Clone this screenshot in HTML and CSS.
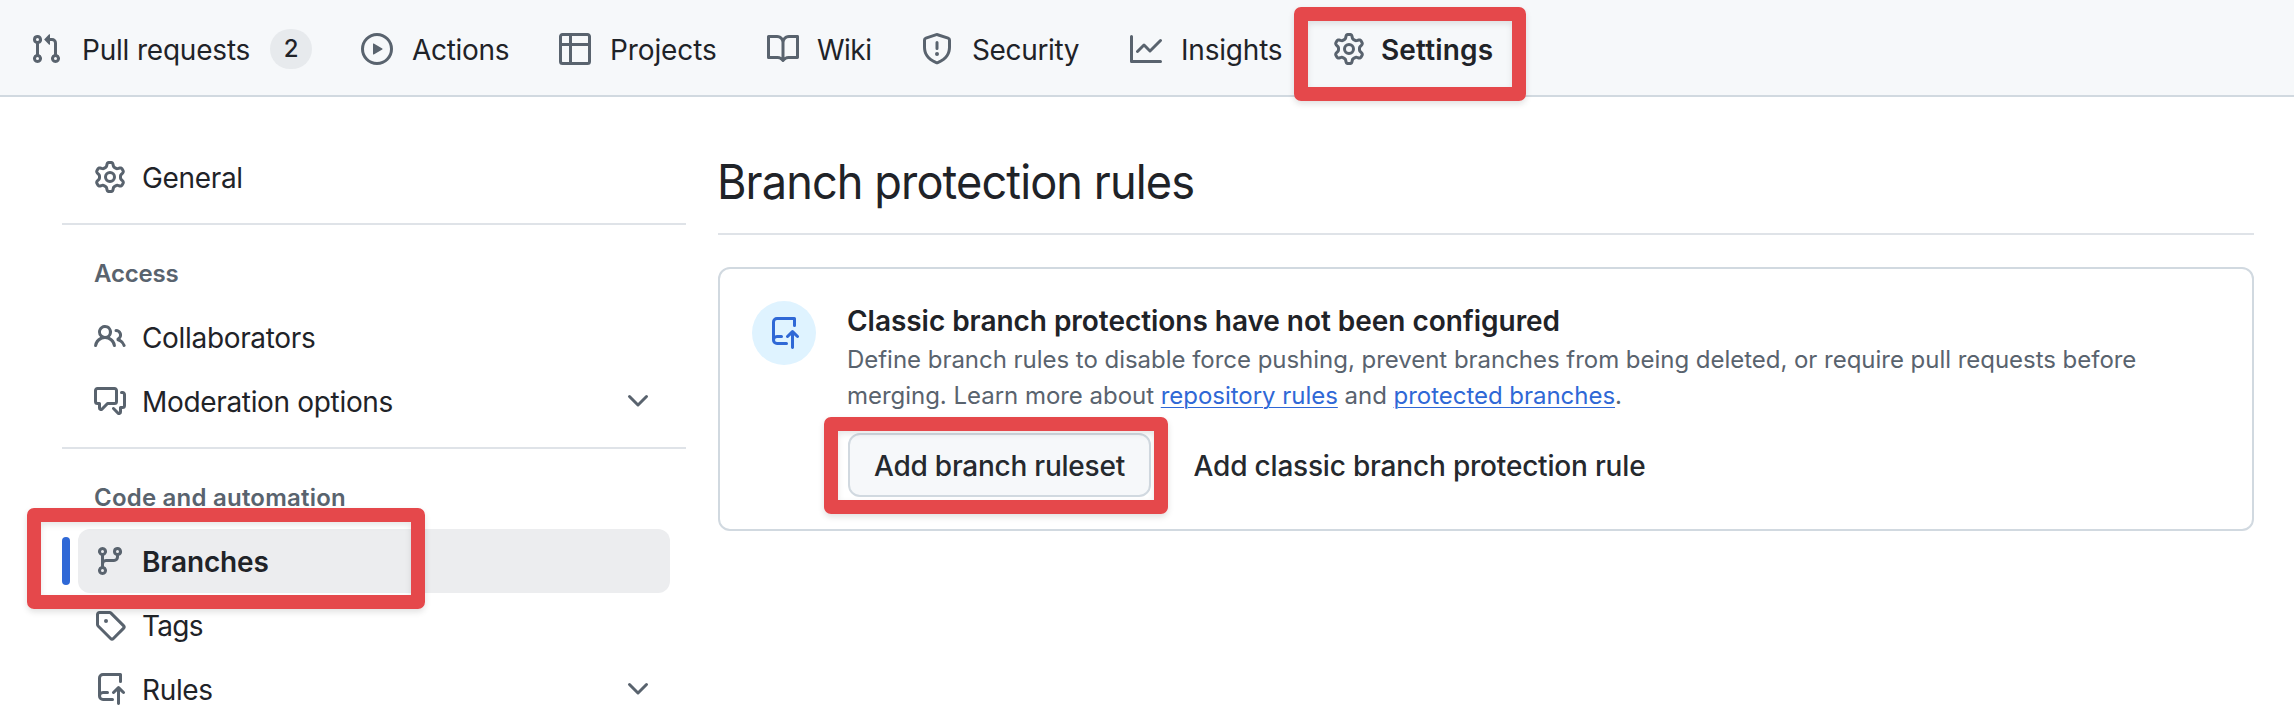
FILE: index.html
```html
<!DOCTYPE html>
<html lang="en">
<head>
<meta charset="utf-8">
<title>Branch protection rules</title>
<link rel="stylesheet" href="styles.css">
</head>
<body>
<svg class="sprite" aria-hidden="true">
  <symbol id="i-pr" viewBox="0 0 16 16"><path d="M1.5 3.25a2.25 2.25 0 1 1 3 2.122v5.256a2.251 2.251 0 1 1-1.5 0V5.372A2.25 2.25 0 0 1 1.5 3.25Zm5.677-.177L9.573.677A.25.25 0 0 1 10 .854V2.5h1A2.5 2.5 0 0 1 13.5 5v5.628a2.251 2.251 0 1 1-1.5 0V5a1 1 0 0 0-1-1h-1v1.646a.25.25 0 0 1-.427.177L7.177 3.427a.25.25 0 0 1 0-.354ZM3.75 2.5a.75.75 0 1 0 0 1.5.75.75 0 0 0 0-1.5Zm0 9.5a.75.75 0 1 0 0 1.5.75.75 0 0 0 0-1.5Zm8.25.75a.75.75 0 1 0 1.5 0 .75.75 0 0 0-1.5 0Z"/></symbol>
  <symbol id="i-play" viewBox="0 0 16 16"><path d="M8 0a8 8 0 1 1 0 16A8 8 0 0 1 8 0ZM1.5 8a6.5 6.5 0 1 0 13 0 6.5 6.5 0 0 0-13 0Zm4.879-2.773 4.264 2.559a.25.25 0 0 1 0 .428l-4.264 2.559A.25.25 0 0 1 6 10.559V5.442a.25.25 0 0 1 .379-.215Z"/></symbol>
  <symbol id="i-table" viewBox="0 0 16 16"><path d="M0 1.75C0 .784.784 0 1.75 0h12.5C15.216 0 16 .784 16 1.75v12.5A1.75 1.75 0 0 1 14.25 16H1.75A1.75 1.75 0 0 1 0 14.25ZM6.5 6.5v8h7.75a.25.25 0 0 0 .25-.25V6.5Zm8-1.5V1.75a.25.25 0 0 0-.25-.25H6.5V5Zm-13 1.5v7.75c0 .138.112.25.25.25H5v-8ZM5 5V1.5H1.75a.25.25 0 0 0-.25.25V5Z"/></symbol>
  <symbol id="i-book" viewBox="0 0 16 16"><path d="M0 1.75A.75.75 0 0 1 .75 1h4.253c1.227 0 2.317.59 3 1.501A3.743 3.743 0 0 1 11.006 1h4.245a.75.75 0 0 1 .75.75v10.5a.75.75 0 0 1-.75.75h-4.507a2.25 2.25 0 0 0-1.591.659l-.622.621a.75.75 0 0 1-1.06 0l-.622-.621A2.25 2.25 0 0 0 5.258 13H.75a.75.75 0 0 1-.75-.75Zm7.251 10.324.004-5.073-.002-2.253A2.25 2.25 0 0 0 5.003 2.5H1.5v9h3.757a3.75 3.75 0 0 1 1.994.574ZM8.755 4.75l-.004 7.322a3.752 3.752 0 0 1 1.992-.572H14.5v-9h-3.495a2.25 2.25 0 0 0-2.25 2.25Z"/></symbol>
  <symbol id="i-shield" viewBox="0 0 16 16"><path d="M7.467.133a1.748 1.748 0 0 1 1.066 0l5.25 1.68A1.75 1.75 0 0 1 15 3.48V7c0 1.566-.32 3.182-1.303 4.682-.983 1.498-2.585 2.813-5.032 3.855a1.697 1.697 0 0 1-1.33 0c-2.447-1.042-4.049-2.357-5.032-3.855C1.32 10.182 1 8.566 1 7V3.48a1.75 1.75 0 0 1 1.217-1.667Zm.61 1.429a.25.25 0 0 0-.153 0l-5.25 1.68a.25.25 0 0 0-.174.238V7c0 1.358.275 2.666 1.057 3.86.784 1.194 2.121 2.34 4.366 3.297a.196.196 0 0 0 .154 0c2.245-.956 3.582-2.104 4.366-3.298C13.225 9.666 13.5 8.36 13.5 7V3.48a.251.251 0 0 0-.174-.237l-5.25-1.68ZM8.75 4.75v3a.75.75 0 0 1-1.5 0v-3a.75.75 0 0 1 1.5 0ZM9 10.5a1 1 0 1 1-2 0 1 1 0 0 1 2 0Z"/></symbol>
  <symbol id="i-graph" viewBox="0 0 16 16"><path d="M1.5 1.75V13.5h13.75a.75.75 0 0 1 0 1.5H.75a.75.75 0 0 1-.75-.75V1.75a.75.75 0 0 1 1.5 0Zm14.28 2.53-5.25 5.25a.75.75 0 0 1-1.06 0L7 7.06 4.28 9.78a.751.751 0 0 1-1.042-.018.751.751 0 0 1-.018-1.042l3.25-3.25a.75.75 0 0 1 1.06 0L10 7.94l4.72-4.72a.751.751 0 0 1 1.042.018.751.751 0 0 1 .018 1.042Z"/></symbol>
  <symbol id="i-gear" viewBox="0 0 16 16"><path d="M8 0a8.2 8.2 0 0 1 .701.031C9.444.095 9.99.645 10.16 1.29l.288 1.107c.018.066.079.158.212.224.231.114.454.243.668.386.123.082.233.09.299.071l1.103-.303c.644-.176 1.392.021 1.82.63.27.385.506.792.704 1.218.315.675.111 1.422-.364 1.891l-.814.806c-.049.048-.098.147-.088.294.016.257.016.515 0 .772-.01.147.038.246.088.294l.814.806c.475.469.679 1.216.364 1.891a7.977 7.977 0 0 1-.704 1.217c-.428.61-1.176.807-1.82.63l-1.102-.302c-.067-.019-.177-.011-.3.071a5.909 5.909 0 0 1-.668.386c-.133.066-.194.158-.211.224l-.29 1.106c-.168.646-.715 1.196-1.458 1.26a8.006 8.006 0 0 1-1.402 0c-.743-.064-1.289-.614-1.458-1.26l-.289-1.106c-.018-.066-.079-.158-.212-.224a5.738 5.738 0 0 1-.668-.386c-.123-.082-.233-.09-.299-.071l-1.103.303c-.644.176-1.392-.021-1.82-.63a8.12 8.12 0 0 1-.704-1.218c-.315-.675-.111-1.422.363-1.891l.815-.806c.05-.048.098-.147.088-.294a6.214 6.214 0 0 1 0-.772c.01-.147-.038-.246-.088-.294l-.815-.806C.635 6.045.431 5.298.746 4.623a7.92 7.92 0 0 1 .704-1.217c.428-.61 1.176-.807 1.82-.63l1.102.302c.067.019.177.011.3-.071.214-.143.437-.272.668-.386.133-.066.194-.158.211-.224l.29-1.106C6.009.645 6.556.095 7.299.03 7.53.01 7.764 0 8 0Zm-.571 1.525c-.036.003-.108.036-.137.146l-.289 1.105c-.147.561-.549.967-.998 1.189-.173.086-.34.183-.5.29-.417.278-.97.423-1.529.27l-1.103-.303c-.109-.03-.175.016-.195.045-.22.312-.412.644-.573.99-.014.031-.021.11.059.19l.815.806c.411.406.562.957.53 1.456a4.709 4.709 0 0 0 0 .582c.032.499-.119 1.05-.53 1.456l-.815.806c-.081.08-.073.159-.059.19.162.346.353.677.573.989.02.03.085.076.195.046l1.102-.303c.56-.153 1.113-.008 1.53.27.161.107.328.204.501.29.447.222.85.629.997 1.189l.289 1.105c.029.109.101.143.137.146a6.6 6.6 0 0 0 1.142 0c.036-.003.108-.036.137-.146l.289-1.105c.147-.561.549-.967.998-1.189.173-.086.34-.183.5-.29.417-.278.97-.423 1.529-.27l1.103.303c.109.029.175-.016.195-.045.22-.313.411-.644.573-.99.014-.031.021-.11-.059-.19l-.815-.806c-.411-.406-.562-.957-.53-1.456a4.709 4.709 0 0 0 0-.582c-.032-.499.119-1.05.53-1.456l.815-.806c.081-.08.073-.159.059-.19a6.464 6.464 0 0 0-.573-.989c-.02-.03-.085-.076-.195-.046l-1.102.303c-.56.153-1.113.008-1.53-.27a4.44 4.44 0 0 0-.501-.29c-.447-.222-.85-.629-.997-1.189l-.289-1.105c-.029-.11-.101-.143-.137-.146a6.6 6.6 0 0 0-1.142 0ZM11 8a3 3 0 1 1-6 0 3 3 0 0 1 6 0ZM9.5 8a1.5 1.5 0 1 0-3.001.001A1.5 1.5 0 0 0 9.5 8Z"/></symbol>
  <symbol id="i-people" viewBox="0 0 16 16"><path d="M2 5.5a3.5 3.5 0 1 1 5.898 2.549 5.508 5.508 0 0 1 3.034 4.084.75.75 0 1 1-1.482.235 4 4 0 0 0-7.9 0 .75.75 0 0 1-1.482-.236A5.507 5.507 0 0 1 3.102 8.05 3.493 3.493 0 0 1 2 5.5ZM11 4a3.001 3.001 0 0 1 2.22 5.018 5.01 5.01 0 0 1 2.56 3.012.749.749 0 0 1-.885.954.752.752 0 0 1-.549-.514 3.507 3.507 0 0 0-2.522-2.372.75.75 0 0 1-.574-.73v-.352a.75.75 0 0 1 .416-.672A1.5 1.5 0 0 0 11 5.5.75.75 0 0 1 11 4Zm-5.5-.5a2 2 0 1 0-.001 3.999A2 2 0 0 0 5.5 3.5Z"/></symbol>
  <symbol id="i-discussion" viewBox="0 0 16 16"><path d="M1.75 1h8.5c.966 0 1.75.784 1.75 1.75v5.5A1.75 1.75 0 0 1 10.25 10H7.061l-2.574 2.573A1.458 1.458 0 0 1 2 11.543V10h-.25A1.75 1.75 0 0 1 0 8.25v-5.5C0 1.784.784 1 1.75 1ZM1.5 2.75v5.5c0 .138.112.25.25.25h1a.75.75 0 0 1 .75.75v2.19l2.72-2.72a.749.749 0 0 1 .53-.22h3.5a.25.25 0 0 0 .25-.25v-5.5a.25.25 0 0 0-.25-.25h-8.5a.25.25 0 0 0-.25.25Zm13 2a.25.25 0 0 0-.25-.25h-.5a.75.75 0 0 1 0-1.5h.5c.966 0 1.75.784 1.75 1.75v5.5A1.75 1.75 0 0 1 14.25 12H14v1.543a1.458 1.458 0 0 1-2.487 1.03L9.22 12.28a.749.749 0 0 1 .326-1.275.749.749 0 0 1 .734.215l2.22 2.22v-2.19a.75.75 0 0 1 .75-.75h1a.25.25 0 0 0 .25-.25Z"/></symbol>
  <symbol id="i-branch" viewBox="0 0 16 16"><path d="M9.5 3.25a2.25 2.25 0 1 1 3 2.122V6A2.5 2.5 0 0 1 10 8.5H6a1 1 0 0 0-1 1v1.128a2.251 2.251 0 1 1-1.5 0V5.372a2.25 2.25 0 1 1 1.5 0v1.836A2.493 2.493 0 0 1 6 7h4a1 1 0 0 0 1-1v-.628A2.25 2.25 0 0 1 9.5 3.25Zm-6 0a.75.75 0 1 0 1.5 0 .75.75 0 0 0-1.5 0Zm8.25-.75a.75.75 0 1 0 0 1.5.75.75 0 0 0 0-1.5ZM4.25 12a.75.75 0 1 0 0 1.5.75.75 0 0 0 0-1.5Z"/></symbol>
  <symbol id="i-tag" viewBox="0 0 16 16"><path d="M1 7.775V2.75C1 1.784 1.784 1 2.75 1h5.025c.464 0 .91.184 1.238.513l6.25 6.25a1.75 1.75 0 0 1 0 2.474l-5.026 5.026a1.75 1.75 0 0 1-2.474 0l-6.25-6.25A1.752 1.752 0 0 1 1 7.775Zm1.5 0c0 .066.026.13.073.177l6.25 6.25a.25.25 0 0 0 .354 0l5.025-5.025a.25.25 0 0 0 0-.354l-6.25-6.25a.25.25 0 0 0-.177-.073H2.75a.25.25 0 0 0-.25.25ZM6 5a1 1 0 1 1 0 2 1 1 0 0 1 0-2Z"/></symbol>
  <symbol id="i-push" viewBox="0 0 16 16"><path d="M2 2.5A2.5 2.5 0 0 1 4.5 0h8.75a.75.75 0 0 1 .75.75v3.5a.75.75 0 0 1-1.5 0V1.5h-8a1 1 0 0 0-1 1v6.708A2.493 2.493 0 0 1 4.5 9h2.25a.75.75 0 0 1 0 1.5H4.5a1 1 0 0 0 0 2h4.75a.75.75 0 0 1 0 1.5H4.5A2.5 2.5 0 0 1 2 11.5Zm12.23 7.79-1.225-1.223v6.184a.75.75 0 0 1-1.5 0V9.066L10.28 10.29a.75.75 0 0 1-1.06-1.061l2.505-2.504a.75.75 0 0 1 1.06 0L15.29 9.23a.751.751 0 0 1-.018 1.042.751.751 0 0 1-1.042.018Z"/></symbol>
  <symbol id="i-chevron" viewBox="0 0 16 16"><path d="M12.78 5.22a.749.749 0 0 1 0 1.06l-4.25 4.25a.749.749 0 0 1-1.06 0L3.22 6.28a.749.749 0 1 1 1.06-1.06L8 8.939l3.72-3.719a.749.749 0 0 1 1.06 0Z"/></symbol>
</svg>

<header class="topnav">
  <a class="tab tab-pulls"><svg class="icon"><use href="#i-pr"/></svg><span class="label">Pull requests</span><span class="counter">2</span></a>
  <a class="tab tab-actions"><svg class="icon"><use href="#i-play"/></svg><span class="label">Actions</span></a>
  <a class="tab tab-projects"><svg class="icon"><use href="#i-table"/></svg><span class="label">Projects</span></a>
  <a class="tab tab-wiki"><svg class="icon"><use href="#i-book"/></svg><span class="label">Wiki</span></a>
  <a class="tab tab-security"><svg class="icon"><use href="#i-shield"/></svg><span class="label">Security</span></a>
  <a class="tab tab-insights"><svg class="icon"><use href="#i-graph"/></svg><span class="label">Insights</span></a>
  <a class="tab tab-settings"><svg class="icon"><use href="#i-gear"/></svg><span class="label">Settings</span></a>
</header>

<div class="layout">
  <nav class="sidebar">
    <a class="row"><svg class="icon"><use href="#i-gear"/></svg><span class="label">General</span></a>
    <hr class="rule">
    <h3 class="group">Access</h3>
    <a class="row"><svg class="icon"><use href="#i-people"/></svg><span class="label">Collaborators</span></a>
    <a class="row"><svg class="icon"><use href="#i-discussion"/></svg><span class="label">Moderation options</span><svg class="icon chevron"><use href="#i-chevron"/></svg></a>
    <hr class="rule">
    <h3 class="group group-code">Code and automation</h3>
    <a class="row current"><svg class="icon"><use href="#i-branch"/></svg><span class="label">Branches</span></a>
    <a class="row row-tags"><svg class="icon"><use href="#i-tag"/></svg><span class="label">Tags</span></a>
    <a class="row"><svg class="icon"><use href="#i-push"/></svg><span class="label">Rules</span><svg class="icon chevron"><use href="#i-chevron"/></svg></a>
  </nav>

  <main class="content">
    <h1 class="title"><span class="title-text">Branch protection rules</span></h1>
    <section class="card">
      <div class="badge"><svg class="icon"><use href="#i-push"/></svg></div>
      <div class="card-body">
        <h2 class="card-title">Classic branch protections have not been configured</h2>
        <p class="desc">Define branch rules to disable force pushing, prevent branches from being deleted, or require pull requests before<br>merging. Learn more about <a class="link">repository rules</a> and <a class="link">protected branches</a>.</p>
        <div class="actions">
          <button class="btn">Add branch ruleset</button>
          <button class="btn btn-plain">Add classic branch protection rule</button>
        </div>
      </div>
    </section>
  </main>
</div>

<div class="mark mark-settings"></div>
<div class="mark mark-branches"></div>
<div class="mark mark-ruleset"></div>
</body>
</html>
```
FILE: styles.css
```css
* { box-sizing: border-box; }
body { margin: 0; width: 2294px; height: 726px; overflow: hidden; background: #fff; color: #1f2328; font-family: Inter, "Liberation Sans", sans-serif; font-size: 28px; line-height: 40px; }
.sprite { position: absolute; width: 0; height: 0; }
.icon { width: 32px; height: 32px; flex: none; fill: #59636e; }
.label { padding-top: 2px; }
.topnav { display: flex; height: 97px; padding: 0 0 0 30px; background: #f6f8fa; border-bottom: 2px solid #d1d9e0; }
.tab { display: flex; align-items: center; gap: 19px; height: 98px; white-space: nowrap; flex: none; }
.tab-pulls { width: 331px; gap: 20px; letter-spacing: -0.2px; }
.tab-actions { width: 198px; letter-spacing: -0.3px; }
.tab-projects { width: 208px; letter-spacing: -0.12px; }
.tab-wiki { width: 154px; gap: 18px; letter-spacing: -0.5px; }
.tab-security { width: 209px; letter-spacing: -0.35px; }
.tab-insights { width: 203px; letter-spacing: -0.2px; }
.tab-settings { font-weight: 600; gap: 16px; letter-spacing: 0.15px; }
.counter { width: 42px; height: 40px; border-radius: 20px; background: #e7eaed; font-size: 24px; font-weight: 500; letter-spacing: 0; text-align: center; }
.layout { display: flex; gap: 32px; height: 629px; }
.sidebar { width: 624px; margin-left: 62px; padding-top: 48px; flex: none; }
.row { display: flex; align-items: center; gap: 16px; height: 64px; margin: 0 16px; padding: 0 16px; border-radius: 12px; letter-spacing: -0.33px; white-space: nowrap; position: relative; }
.row-tags { letter-spacing: -0.7px; }
.chevron { margin-left: auto; }
.current { background: #ecedef; font-weight: 600; letter-spacing: -0.15px; }
.current::before { content: ""; position: absolute; left: -16px; top: 8px; width: 8px; height: 48px; border-radius: 4px; background: #2f68d6; }
.rule { border: 0; height: 2px; margin: 14px 0; background: #dfe3e8; }
.group { margin: 0; padding: 17px 32px 13px; height: 66px; font-size: 24px; font-weight: 600; line-height: 36px; letter-spacing: -0.2px; color: #59636e; white-space: nowrap; }
.group-code { letter-spacing: 0.22px; }
.content { width: 1536px; padding-top: 48px; flex: none; }
.title { margin: 0 0 32px; height: 90px; border-bottom: 2px solid #dfe3e8; font-size: 47.5px; font-weight: 400; line-height: 74px; white-space: nowrap; }
.title-text { display: inline-block; letter-spacing: -0.95px; transform: scaleX(0.95); transform-origin: 0 50%; margin-left: -1px; }
.card { display: flex; gap: 32px; height: 264px; padding: 32px; border: 2px solid #d1d9e0; border-radius: 12px; }
.badge { display: flex; align-items: center; justify-content: center; width: 64px; height: 64px; border-radius: 50%; background: #dff3ff; }
.badge .icon { fill: #2f68d6; }
.card-title { margin: 0 0 0 -1px; font-size: 28px; font-weight: 600; line-height: 41px; letter-spacing: -0.04px; white-space: nowrap; }
.desc { margin: 0 0 0 -1px; font-size: 24px; line-height: 36px; letter-spacing: -0.03px; color: #59636e; white-space: nowrap; }
.link { color: #2f68d6; text-decoration: underline; text-decoration-thickness: 1px; text-underline-offset: 3px; }
.actions { display: flex; gap: 16px; margin-top: 19px; }
.btn { width: 303px; height: 64px; padding: 2px 0 0; border: 2px solid #d1d9e0; border-radius: 12px; background: #f6f8fa; color: #25292e; font: 500 28px/40px Inter, "Liberation Sans", sans-serif; letter-spacing: -0.24px; white-space: nowrap; }
.btn-plain { width: 505px; border-color: transparent; background: none; letter-spacing: -0.19px; }
.mark { position: absolute; border: 14px solid #e5484b; border-radius: 7px; box-shadow: 0 3px 6px rgba(0,0,0,.12), inset 0 3px 6px rgba(0,0,0,.1); }
.mark-settings { left: 1294px; top: 7px; width: 232px; height: 94px; }
.mark-branches { left: 27px; top: 508px; width: 398px; height: 101px; }
.mark-ruleset { left: 824px; top: 417px; width: 344px; height: 97px; }
```
